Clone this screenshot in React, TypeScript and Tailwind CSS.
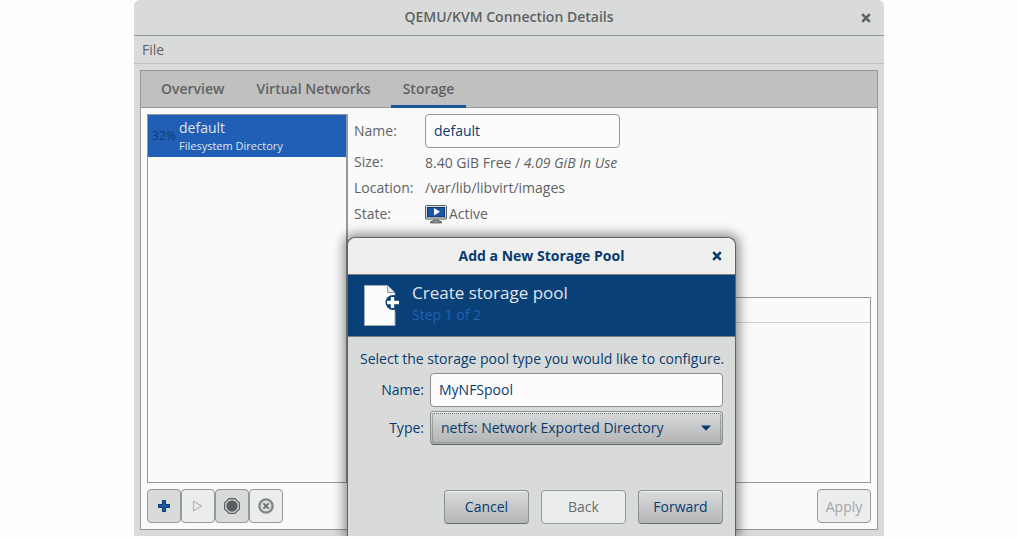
import { useState } from "react";
import type { ReactNode } from "react";

function CloseIcon() {
  return (
    <svg viewBox="0 0 10 10" className="size-2.5" fill="none" stroke="currentColor" strokeWidth="2.6">
      <path d="M1.2 1.2 8.8 8.8M8.8 1.2 1.2 8.8" />
    </svg>
  );
}

function MonitorIcon() {
  return (
    <svg viewBox="0 0 22 19" className="h-[19px] w-[22px]" aria-hidden="true">
      <rect x="0.5" y="0.5" width="21" height="14" rx="1" fill="#dcdddd" stroke="#5b5e60" />
      <rect x="2.5" y="2.5" width="17" height="9.5" fill="#1d55a6" stroke="#073b70" strokeWidth="1" />
      <path d="M9 3v7.5l6-3.75z" fill="#fff" />
      <rect x="1" y="12" width="20" height="3" fill="#a3a5a6" />
      <path d="M8 15h6v1.5h2.5V18h-11v-1.5H8z" fill="#8e9294" stroke="#55585a" strokeWidth="0.8" />
    </svg>
  );
}

function NewDocumentIcon() {
  return (
    <svg viewBox="0 0 36 42" className="h-[42px] w-9" aria-hidden="true">
      <path d="M0.5 0.5H23.5L31 8V40.5H0.5z" fill="#fcfcfc" stroke="#a4adb6" />
      <path d="M23.5 0.5V7.5H31" fill="#e2e6ea" stroke="#8e9aa6" />
      <circle cx="29" cy="17.5" r="7.5" fill="#0a4078" />
      <path d="M31.5 8H36v20h-4.5z" fill="#0a4078" />
      <path d="M28.5 12v11M23 17.5h12" stroke="#fff" strokeWidth="3.4" />
    </svg>
  );
}

function PlusIcon() {
  return (
    <svg viewBox="0 0 12 12" className="size-3">
      <path d="M4.5 0.5h3v4h4v3h-4v4h-3v-4h-4v-3h4z" fill="#1d58a8" stroke="#073b70" />
    </svg>
  );
}

function PlayIcon() {
  return (
    <svg viewBox="0 0 12 12" className="size-3">
      <path d="M1.5 1.2v9.6L9.5 6z" fill="#e9eaea" stroke="#b4b6b6" strokeWidth="1.2" />
    </svg>
  );
}

function StopIcon() {
  return (
    <svg viewBox="0 0 16 16" className="size-4">
      <path d="M5 0.6h6L15.4 5v6L11 15.4H5L0.6 11V5z" fill="#d4d5d5" stroke="#5a5d5f" strokeWidth="1.1" />
      <circle cx="8" cy="8" r="5.7" fill="#5a5d5f" />
    </svg>
  );
}

function DeleteIcon() {
  return (
    <svg viewBox="0 0 16 16" className="size-4" fill="none">
      <circle cx="8" cy="8" r="6.6" fill="#dfe0e0" stroke="#85888a" strokeWidth="2.4" />
      <path d="M5.4 5.4l5.2 5.2M10.6 5.4l-5.2 5.2" stroke="#6b6e70" strokeWidth="1.9" />
    </svg>
  );
}

function ToolButton({ label, disabled, children }: { label: string; disabled?: boolean; children: ReactNode }) {
  return (
    <button
      type="button"
      aria-label={label}
      disabled={disabled}
      className="flex size-[34px] items-center justify-center rounded-sm border border-[#94979b] bg-[#d9dbda] disabled:bg-[#ebecec]"
    >
      {children}
    </button>
  );
}

function DialogButton({ disabled, children }: { disabled?: boolean; children: ReactNode }) {
  return (
    <button
      type="button"
      disabled={disabled}
      className="h-[34px] w-[85px] rounded-sm border border-[#8d9093] border-b-[#6b6e70] bg-linear-to-b from-[#dadbdc] to-[#b4b5b5] pb-0.5 text-[#073b70] shadow-[inset_0_1px_#f2f3f3] disabled:border-[#94979b] disabled:bg-none disabled:bg-[#ebecec] disabled:text-[#6b6e71] disabled:shadow-none"
    >
      {children}
    </button>
  );
}

const tabs = ["Overview", "Virtual Networks", "Storage"];

function AddPoolDialog() {
  const [name, setName] = useState("MyNFSpool");
  return (
    <section
      role="dialog"
      aria-labelledby="dialog-title"
      className="absolute top-[237px] bottom-0 left-[213px] flex w-[389px] flex-col rounded-t-lg border border-b-0 border-[#5f6468] bg-[#d9dbda] text-[#073b70] shadow-[0_0_12px_3px_rgba(0,0,0,0.45)]"
    >
      <header className="relative flex h-9 shrink-0 items-center justify-center rounded-t-lg bg-[#efefee]">
        <h2 id="dialog-title" className="pb-0.5 font-bold">Add a New Storage Pool</h2>
        <button type="button" aria-label="Close dialog" className="absolute right-3 p-px">
          <CloseIcon />
        </button>
      </header>
      <div className="flex h-[63px] shrink-0 gap-3 border-y border-[#7b8084] bg-[#0a4078] pt-2.5 pl-4">
        <NewDocumentIcon />
        <div className="-mt-1">
          <p className="text-[17px] leading-6 text-[#e1e5e8]">Create storage pool</p>
          <p className="leading-5 text-[#2461b4]">Step 1 of 2</p>
        </div>
      </div>
      <form className="flex grow flex-col px-3 pt-3 pb-3">
        <p className="leading-5 whitespace-nowrap">Select the storage pool type you would like to configure.</p>
        <div className="mt-1 grid grid-cols-[64px_1fr] items-center gap-x-1.5 gap-y-1 text-right">
          <label htmlFor="pool-name" className="pb-0.5">Name:</label>
          <input
            id="pool-name"
            value={name}
            onChange={(e) => setName(e.target.value)}
            className="h-[34px] w-full rounded-sm border border-[#8d9093] bg-[#fcfcfc] px-2 pb-0.5 outline-none"
          />
          <label htmlFor="pool-type" className="pb-0.5">Type:</label>
          <div className="relative">
            <select
              id="pool-type"
              className="h-[34px] w-full appearance-none rounded-sm border border-[#8d9093] border-b-[#5f6265] bg-linear-to-b from-[#d8dadb] to-[#b2b3b3] pb-0.5 pl-2.5 text-left shadow-[inset_0_1px_#f2f3f3] outline-1 -outline-offset-3 outline-dotted outline-[#717476]"
            >
              <option>netfs: Network Exported Directory</option>
            </select>
            <svg viewBox="0 0 10 6" className="pointer-events-none absolute top-[14px] right-3 h-1.5 w-2.5" fill="#073b70">
              <path d="M0 0.5h10L5 5.8z" />
            </svg>
          </div>
        </div>
        <div className="mt-auto flex justify-end gap-3">
          <DialogButton>Cancel</DialogButton>
          <DialogButton disabled>Back</DialogButton>
          <DialogButton>Forward</DialogButton>
        </div>
      </form>
    </section>
  );
}

export default function App() {
  const [tab, setTab] = useState("Storage");
  const [poolName, setPoolName] = useState("default");
  return (
    <div className="min-h-screen bg-[#fdfdfd] px-[134px] font-['Open_Sans','Noto_Sans',sans-serif] text-[14px] text-[#5f6265]">
      <main className="relative flex flex-col overflow-hidden rounded-t-md bg-[#d9dbda]">
        <header className="relative flex h-9 items-center justify-center border-b border-[#94979b]">
          <h1 className="pb-0.5 font-semibold">QEMU/KVM Connection Details</h1>
          <button type="button" aria-label="Close window" className="absolute right-3 p-px">
            <CloseIcon />
          </button>
        </header>
        <nav className="flex h-7 items-center border-b border-[#bfc0bf] px-2">
          <button type="button">File</button>
        </nav>
        <div className="m-1.5 flex flex-col border border-[#94979b] bg-[#fafafa]">
          <div role="tablist" className="flex h-[37px] gap-2 border-b border-[#94979b] bg-[#c0c0bf] px-2">
            {tabs.map((t) => (
              <button
                key={t}
                type="button"
                role="tab"
                aria-selected={tab === t}
                onClick={() => setTab(t)}
                className="h-[37px] border-b-3 border-transparent px-3 font-semibold aria-selected:border-[#1c519c]"
              >
                {t}
              </button>
            ))}
          </div>
          <div className="flex flex-col gap-1.5 p-1.5">
            <div className="flex h-[369px]">
              <ul className="w-[201px] shrink-0 border border-r-2 border-[#94979b]">
                <li>
                  <button type="button" className="flex h-[42px] w-full items-center gap-[3px] bg-[#205fb5] px-1 text-left">
                    <span className="w-6 text-[12px] text-[#0a3d75]">32%</span>
                    <span className="text-[#dfe4ea]">
                      <span className="block leading-5">default</span>
                      <span className="block text-[11px] leading-4">Filesystem Directory</span>
                    </span>
                  </button>
                </li>
              </ul>
              <div className="flex min-w-0 grow flex-col justify-between pl-1.5">
                <div className="grid grid-cols-[65px_1fr] items-center gap-x-1.5">
                  <label htmlFor="details-name" className="pb-0.5">Name:</label>
                  <input
                    id="details-name"
                    value={poolName}
                    onChange={(e) => setPoolName(e.target.value)}
                    className="h-[34px] w-[195px] rounded-sm border border-[#94979b] bg-[#fcfcfc] px-2 pb-0.5 text-[#073b70] outline-none"
                  />
                  <span className="leading-7">Size:</span>
                  <span>
                    8.40 GiB Free / <em>4.09 GiB In Use</em>
                  </span>
                  <span className="leading-6">Location:</span>
                  <span className="leading-6">/var/lib/libvirt/images</span>
                  <span className="leading-7">State:</span>
                  <span className="flex items-center gap-0.5 leading-7">
                    <MonitorIcon />
                    Active
                  </span>
                </div>
                <div className="h-[186px] border border-[#94979b]">
                  <div className="h-[25px] border-b border-[#cfd0d0]" />
                </div>
              </div>
            </div>
            <div className="flex justify-between">
              <div className="flex">
                <ToolButton label="Add pool"><PlusIcon /></ToolButton>
                <ToolButton label="Start pool" disabled><PlayIcon /></ToolButton>
                <ToolButton label="Stop pool"><StopIcon /></ToolButton>
                <ToolButton label="Delete pool" disabled><DeleteIcon /></ToolButton>
              </div>
              <button type="button" disabled className="h-[34px] w-[54px] rounded-sm border border-[#94979b] bg-[#ebecec] text-[#a3a5a7]">
                Apply
              </button>
            </div>
          </div>
        </div>
        <AddPoolDialog />
      </main>
    </div>
  );
}
